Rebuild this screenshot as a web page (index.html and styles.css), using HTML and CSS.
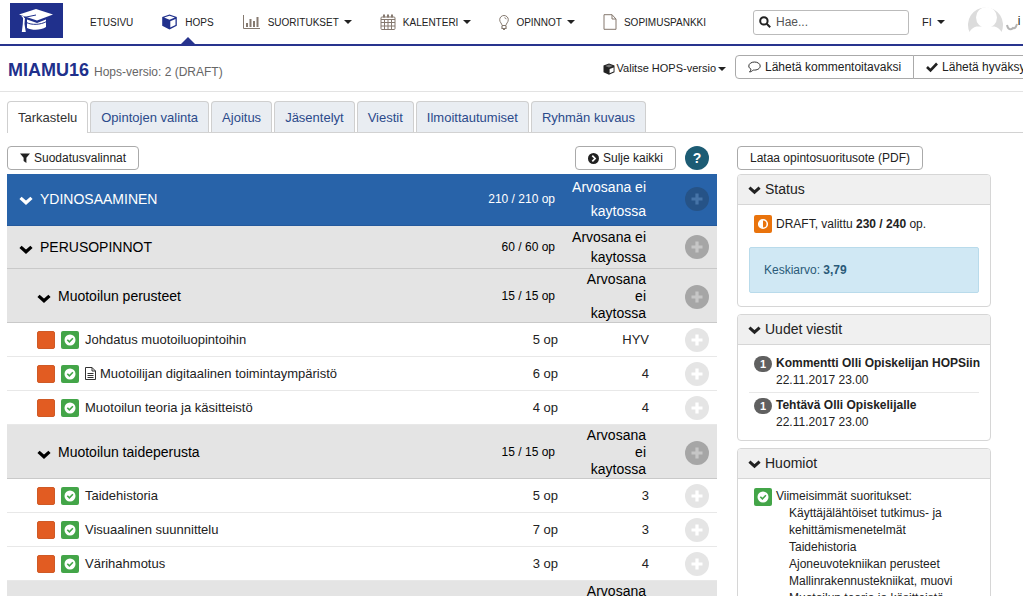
FILE: index.html
```html
<!DOCTYPE html>
<html lang="fi">
<head>
<meta charset="utf-8">
<meta name="viewport" content="width=device-width, initial-scale=1">
<title>MIAMU16 – HOPS</title>
<link rel="stylesheet" href="styles.css">
</head>
<body>
<svg class="sprite" aria-hidden="true">
  <symbol id="chevron" viewBox="0 0 12 12"><path d="M1.300 4.200 6 8.400l4.700-4.200" fill="none" stroke="currentColor" stroke-width="2.800"/></symbol>
  <symbol id="plus" viewBox="0 0 24 24"><path d="M12 6.500v11M6.500 12h11" fill="none" stroke="currentColor" stroke-width="3.200"/></symbol>
  <symbol id="check" viewBox="0 0 12 12"><circle cx="6" cy="6" r="5.500" fill="#fff"/><path d="M3.300 5.800 5.400 7.900 8.900 4.300" fill="none" stroke="#43a548" stroke-width="1.600"/></symbol>
  <symbol id="cube" viewBox="0 0 16 16"><path d="M8 .5 15.300 3v8.800L8 15.500.7 11.800V3z" fill="currentColor"/><path d="M8 1.700 13.400 3.600 8 5.800 2.600 3.600z" fill="#fff"/><path d="M8.800 7.200 14 5v6L8.800 13.600z" fill="#fff"/></symbol>
  <symbol id="cube-small" viewBox="0 0 12 12"><path d="M6 .5 11.500 2.600v6.600L6 11.700.5 9.200V2.600z" fill="currentColor"/><path d="M6.600 6 10.600 4.400v4.100L6.600 10.300z" fill="#fff"/><path d="m6 1.500 3.800 1.400L6 4.400 2.200 2.900z" fill="#777"/></symbol>
</svg>

<header class="topbar">
  <a class="logo" href="#" aria-label="Etusivu">
    <svg viewBox="0 0 53 35" width="53" height="35"><path d="M9 11.500 26 6l17 5.500-16 6z" fill="#fff"/><path d="M17 16.500 27 20l9-3.500v7.500c-5 3.500-14 3.500-19 1z" fill="#fff"/><path d="M11 12.500 15 14l-.500 7 1.300 8h-4l1-8 .3-6z" fill="#fff"/><path d="m14 14.500 12-2.500" stroke="#20308c" fill="none"/><path d="M16.500 19.500c5 2.700 14 2.500 20-1" stroke="#20308c" fill="none"/></svg>
  </a>
  <nav class="nav">
    <a href="#">ETUSIVU</a>
    <a href="#" class="active"><svg class="brand" width="17" height="16"><use href="#cube"/></svg>HOPS</a>
    <a href="#"><svg width="19" height="15" viewBox="0 0 19 15" fill="none" stroke="#85796f"><path d="M1.500 0v13.500H18"/><path d="M5 12V8M8.500 12V4M12 12V6M15.500 12V2" stroke-width="2"/></svg>SUORITUKSET<i class="caret"></i></a>
    <a href="#"><svg width="16" height="16" viewBox="0 0 16 16" fill="none" stroke="#85796f"><rect x="1" y="3" width="14" height="12.500" rx="1"/><path d="M1 5.500h14M1 8.500h14M1 12h14M4.500 5.500v10M8 5.500v10M11.500 5.500v10"/><path d="M4 .5v3M8 .5v3M12 .5v3" stroke-width="2"/></svg>KALENTERI<i class="caret"></i></a>
    <a href="#"><svg width="10" height="15" viewBox="0 0 10 15" fill="none" stroke="#85796f"><path d="M3 10.500C3 8.500.7 7.400.7 4.700a4.300 4.200 0 0 1 8.600 0C9.300 7.400 7 8.500 7 10.500zM5.500 2.700c1 .2 1.500.7 1.700 1.500"/><path d="M3 11v2.500h4V11M4 14.500h2" stroke-width="1.200"/></svg>OPINNOT<i class="caret"></i></a>
    <a href="#"><svg width="14" height="16" viewBox="0 0 14 16" fill="none" stroke="#85796f"><path d="M1 .7h8l4 4.300v10.300H1zM9 .7V5h4"/></svg>SOPIMUSPANKKI</a>
  </nav>
  <div class="tools">
    <label class="search"><svg width="12" height="12" viewBox="0 0 12 12" fill="none" stroke="#222" stroke-width="2"><circle cx="4.900" cy="4.900" r="3.700"/><path d="m7.700 7.700 3.500 3.500"/></svg><input type="search" placeholder="Hae..." aria-label="Hae"></label>
    <a class="lang" href="#">FI<i class="caret"></i></a>
    <a class="user" href="#"><svg width="35" height="31" viewBox="0 0 35 31"><path d="M1.500 29A17.500 17.500 0 1 1 33.500 29c-1.500-3-4-4.500-7-5.500H8.500c-3 1-5.500 2.500-7 5.500z" fill="#dcdcdc"/><ellipse cx="18.500" cy="14.500" rx="10.500" ry="10.500" fill="#fff"/></svg><svg width="15" height="31" viewBox="0 0 15 31"><path d="M4 22c1 5 4 5 6 3 2 1 3-1 4-4" fill="none" stroke="#b4b4b4" stroke-width="2"/></svg><span>i</span></a>
  </div>
</header>

<div class="titlebar">
  <h1>MIAMU16 <small>Hops-versio: 2 (DRAFT)</small></h1>
  <a class="version" href="#"><svg width="12" height="12"><use href="#cube-small"/></svg>Valitse HOPS-versio<i class="caret"></i></a>
  <div class="actions">
    <button class="btn"><svg width="13" height="12" viewBox="0 0 13 12" fill="none" stroke="#333"><path d="M6.500 1C3.400 1 .8 2.700.8 5c0 1.400.9 2.500 2.200 3.200C2.900 9.500 2.200 10.300 1.500 11 3.300 10.800 4.400 9.900 5.200 9c4 .5 7-1.500 7-4 0-2.300-2.600-4-5.700-4z"/></svg>Lähetä kommentoitavaksi</button><button class="btn"><svg width="12" height="12" viewBox="0 0 12 12"><path d="m1 6 3.500 3.500L11 2.500" fill="none" stroke="#222" stroke-width="2.600"/></svg>Lähetä hyväksyttäväksi</button>
  </div>
</div>

<nav class="tabs">
  <a href="#" class="current">Tarkastelu</a>
  <a href="#">Opintojen valinta</a>
  <a href="#">Ajoitus</a>
  <a href="#">Jäsentelyt</a>
  <a href="#">Viestit</a>
  <a href="#">Ilmoittautumiset</a>
  <a href="#">Ryhmän kuvaus</a>
</nav>

<div class="content">
  <main>
    <div class="toolbar">
      <button class="btn"><svg width="10" height="10" viewBox="0 0 10 10"><path d="M0 .5h10L6.400 4.700V10L3.600 8V4.700z" fill="#222"/></svg>Suodatusvalinnat</button>
      <button class="btn close-all"><svg width="11" height="11" viewBox="0 0 11 11"><circle cx="5.500" cy="5.500" r="5.500" fill="#222"/><path d="m4.300 2.700 2.800 2.800-2.800 2.800" fill="none" stroke="#fff" stroke-width="1.700"/></svg>Sulje kaikki</button>
      <button class="help" aria-label="Ohje">?</button>
    </div>
    <table class="plan">
      <colgroup><col><col class="c-credits"><col class="c-grade"><col class="c-add"></colgroup>
      <tbody>
        <tr class="module top"><td><div class="name"><svg><use href="#chevron"/></svg>YDINOSAAMINEN</div></td><td>210 / 210 op</td><td>Arvosana ei kaytossa</td><td><button class="add" aria-label="Lisää"><svg><use href="#plus"/></svg></button></td></tr>
        <tr class="module mid"><td><div class="name"><svg><use href="#chevron"/></svg>PERUSOPINNOT</div></td><td>60 / 60 op</td><td>Arvosana ei kaytossa</td><td><button class="add" aria-label="Lisää"><svg><use href="#plus"/></svg></button></td></tr>
        <tr class="module sub"><td><div class="name"><svg><use href="#chevron"/></svg>Muotoilun perusteet</div></td><td>15 / 15 op</td><td>Arvosana ei kaytossa</td><td><button class="add" aria-label="Lisää"><svg><use href="#plus"/></svg></button></td></tr>
        <tr class="course"><td><div class="name"><i class="mark"></i><span class="badge ok"><svg><use href="#check"/></svg></span>Johdatus muotoiluopintoihin</div></td><td>5 op</td><td>HYV</td><td><button class="add" aria-label="Lisää"><svg><use href="#plus"/></svg></button></td></tr>
        <tr class="course"><td><div class="name"><i class="mark"></i><span class="badge ok"><svg><use href="#check"/></svg></span><span class="noted"><svg width="11" height="13" viewBox="0 0 11 13" fill="none" stroke="#333"><path d="M.5.5h6.500l3.500 3.500v8.500H.5zM7 .5V4h3.500M2.500 6.500h6M2.500 8.500h6M2.500 10.500h6"/></svg>Muotoilijan digitaalinen toimintaympäristö</span></div></td><td>6 op</td><td>4</td><td><button class="add" aria-label="Lisää"><svg><use href="#plus"/></svg></button></td></tr>
        <tr class="course"><td><div class="name"><i class="mark"></i><span class="badge ok"><svg><use href="#check"/></svg></span>Muotoilun teoria ja käsitteistö</div></td><td>4 op</td><td>4</td><td><button class="add" aria-label="Lisää"><svg><use href="#plus"/></svg></button></td></tr>
        <tr class="module sub"><td><div class="name"><svg><use href="#chevron"/></svg>Muotoilun taideperusta</div></td><td>15 / 15 op</td><td>Arvosana ei kaytossa</td><td><button class="add" aria-label="Lisää"><svg><use href="#plus"/></svg></button></td></tr>
        <tr class="course"><td><div class="name"><i class="mark"></i><span class="badge ok"><svg><use href="#check"/></svg></span>Taidehistoria</div></td><td>5 op</td><td>3</td><td><button class="add" aria-label="Lisää"><svg><use href="#plus"/></svg></button></td></tr>
        <tr class="course"><td><div class="name"><i class="mark"></i><span class="badge ok"><svg><use href="#check"/></svg></span>Visuaalinen suunnittelu</div></td><td>7 op</td><td>3</td><td><button class="add" aria-label="Lisää"><svg><use href="#plus"/></svg></button></td></tr>
        <tr class="course"><td><div class="name"><i class="mark"></i><span class="badge ok"><svg><use href="#check"/></svg></span>Värihahmotus</div></td><td>3 op</td><td>4</td><td><button class="add" aria-label="Lisää"><svg><use href="#plus"/></svg></button></td></tr>
        <tr class="module sub"><td></td><td></td><td>Arvosana ei kaytossa</td><td></td></tr>
      </tbody>
    </table>
  </main>

  <aside>
    <button class="btn pdf">Lataa opintosuoritusote (PDF)</button>
    <section class="panel">
      <h2><svg><use href="#chevron"/></svg>Status</h2>
      <div class="body status">
        <div class="item"><span class="badge draft"><svg viewBox="0 0 12 12"><circle cx="6" cy="6" r="4.300" fill="none" stroke="#fff" stroke-width="1.600"/><path d="M6 2v8a4 4 0 0 1 0-8z" fill="#fff"/></svg></span><p>DRAFT, valittu <b>230 / 240</b> op.</p></div>
        <p class="average">Keskiarvo: <b>3,79</b></p>
      </div>
    </section>
    <section class="panel">
      <h2><svg><use href="#chevron"/></svg>Uudet viestit</h2>
      <div class="body messages">
        <div class="item"><span class="count">1</span><p><b>Kommentti Olli Opiskelijan HOPSiin</b><br>22.11.2017 23.00</p></div>
        <div class="item"><span class="count">1</span><p><b>Tehtävä Olli Opiskelijalle</b><br>22.11.2017 23.00</p></div>
      </div>
    </section>
    <section class="panel">
      <h2><svg><use href="#chevron"/></svg>Huomiot</h2>
      <div class="body">
        <div class="item"><span class="badge ok"><svg><use href="#check"/></svg></span><div>Viimeisimmät suoritukset:
          <ul><li>Käyttäjälähtöiset tutkimus- ja kehittämismenetelmät</li><li>Taidehistoria</li><li>Ajoneuvotekniikan perusteet</li><li>Mallinrakennustekniikat, muovi</li><li>Muotoilun teoria ja käsitteistö</li></ul></div></div>
      </div>
    </section>
  </aside>
</div>
</body>
</html>
```
FILE: styles.css
```css
* { box-sizing: border-box; }
body {
  margin: 0;
  overflow-x: hidden;
  background: #fff;
  color: #222;
  font: 12px/17px "Liberation Sans", Arial, sans-serif;
}
a { color: inherit; text-decoration: none; }
p, h1, h2, ul { margin: 0; padding: 0; }
button, input { font: inherit; color: inherit; }
svg { display: block; flex: none; }
.sprite { display: none; }
.caret {
  border: 4px solid transparent;
  border-top-color: currentColor;
  border-bottom: 0;
}

.topbar {
  display: flex;
  align-items: center;
  height: 46px;
  padding-left: 10px;
  border-bottom: 2px solid #28348e;
  white-space: nowrap;
}
.logo { margin-bottom: 3px; background: #20308c; }
.nav { display: flex; align-self: stretch; gap: 28px; margin-left: 27px; font-size: 10px; }
.nav a { position: relative; display: flex; align-items: center; gap: 7px; }
.nav .caret, .lang .caret { margin-left: -2px; }
.brand { color: #20308c; }
.active::after {
  content: "";
  position: absolute;
  bottom: 0;
  left: 50%;
  margin-left: -7px;
  border: 7px solid transparent;
  border-top: 0;
  border-bottom-color: #28348e;
}
.tools { display: flex; align-items: center; align-self: stretch; flex: none; width: 270px; margin-left: auto; overflow: hidden; }
.search {
  display: flex;
  flex: none;
  align-items: center;
  gap: 5px;
  width: 156px;
  height: 25px;
  padding: 0 5px;
  border: 1px solid #bbb;
  border-radius: 3px;
}
.search input { width: 100%; min-width: 0; padding: 0; border: 0; background: none; outline: 0; }
.search input::placeholder { color: #555; opacity: 1; }
.lang { display: flex; align-items: center; gap: 7px; margin: 0 23px 0 13px; font-size: 11px; }
.user { display: flex; align-items: center; align-self: flex-start; padding-top: 3px; }
.user span { padding-top: 5px; }

.titlebar {
  display: flex;
  align-items: center;
  height: 46px;
  padding-left: 8px;
  border-bottom: 1px solid #e3e3e3;
  white-space: nowrap;
}
h1 { padding-top: 4px; color: #20308c; font-size: 18px; line-height: 20px; }
h1 small { color: #666; font-size: 12px; font-weight: normal; }
.version { display: flex; align-items: center; gap: 2px; margin-left: auto; padding-right: 9px; font-size: 11px; }
.actions { display: flex; flex: none; width: 288px; margin-bottom: 3px; overflow: hidden; }
.btn {
  display: flex;
  flex: none;
  align-items: center;
  gap: 4px;
  height: 24px;
  padding: 0 12px;
  border: 1px solid #aaa;
  border-radius: 4px;
  background: #fff;
  font-size: 12px;
}
.actions .btn:first-child { border-radius: 4px 0 0 4px; }
.actions .btn + .btn { margin-left: -1px; border-radius: 0 4px 4px 0; }

.tabs {
  display: flex;
  gap: 2px;
  margin: 9px 0 13px 7px;
  border-bottom: 1px solid #d2d2d2;
  font-size: 13px;
}
.tabs a {
  height: 31px;
  padding: 0 10px;
  border: 1px solid #cfcfcf;
  border-bottom: 0;
  border-radius: 4px 4px 0 0;
  background: #e9edf2;
  color: #2b4a8b;
  line-height: 31px;
}
.tabs .current { margin-bottom: -1px; height: 32px; background: #fff; color: #333; }

.content {
  display: grid;
  grid-template-columns: minmax(0, 1fr) 254px;
  gap: 20px;
  padding: 0 32px 0 7px;
}
.toolbar { display: flex; align-items: center; gap: 9px; height: 24px; margin-bottom: 4px; }
.close-all { margin-left: auto; }
.help {
  width: 24px;
  height: 24px;
  margin-right: 8px;
  padding: 0;
  border: 0;
  border-radius: 50%;
  background: #1d5c74;
  color: #fff;
  font-size: 14px;
  font-weight: bold;
}

.plan { width: 100%; table-layout: fixed; border-collapse: separate; border-spacing: 0; }
.c-credits { width: 100px; }
.c-grade { width: 91px; }
.c-add { width: 68px; }
.plan td { padding: 0; text-align: right; }
.plan td:first-child { text-align: left; }
.plan td:last-child { padding-right: 8px; }
.name { display: flex; align-items: center; }
.name > svg { width: 14px; height: 14px; margin: 3px 7px 0 0; }
.add {
  display: block;
  width: 24px;
  height: 24px;
  margin-left: auto;
  padding: 0;
  border: 0;
  border-radius: 50%;
}
.add svg { width: 24px; height: 24px; }

.module td { border-bottom: 1px solid #c9c9c9; background: #e4e4e4; color: #000; font-size: 14px; }
.module td:nth-child(2) { padding-right: 3px; font-size: 12px; }
.module td:nth-child(3) { padding-right: 3px; }
.module .name { padding-left: 12px; }
.module .add { background: #a6a6a6; color: #c6c6c6; }
.module.top td { height: 52px; padding-bottom: 2px; border-color: #24599c; background: #2863a9; color: #fff; line-height: 24px; }
.module.top .add { background: #265387; color: #4674a8; }
.module.mid td { height: 43px; line-height: 20px; }
.module.sub td { height: 54px; padding-top: 2px; line-height: 17px; }
.module.sub td:nth-child(3) { padding-left: 20px; }
.module.sub .name { padding-left: 30px; }

.course td { height: 34px; border-bottom: 1px solid #e8e8e8; font-size: 13px; }
.course .name { gap: 6px; padding-left: 30px; }
.course .add { background: #e5e5e5; color: #fff; }
.noted { display: flex; align-items: center; gap: 4px; }
.mark { width: 18px; height: 18px; border: 1px solid #cf5a26; border-radius: 2px; background: #e25c22; }
.badge {
  display: flex;
  flex: none;
  align-items: center;
  justify-content: center;
  width: 18px;
  height: 18px;
  border-radius: 2px;
}
.badge svg { width: 12px; height: 12px; }
.ok { background: #43a548; }
.draft { background: #e9730c; }

.pdf { margin-bottom: 4px; }
.panel { margin-bottom: 7px; border: 1px solid #d6d6d6; border-radius: 4px; overflow: hidden; }
.panel h2 {
  display: flex;
  align-items: center;
  gap: 4px;
  height: 30px;
  padding-left: 10px;
  border-bottom: 1px solid #d6d6d6;
  background: #f0f0f0;
  font-size: 14px;
  font-weight: normal;
}
.panel h2 svg { width: 13px; height: 13px; }
.body { padding: 9px 11px; }
.item { display: flex; gap: 4px; padding-left: 5px; }
.status .item { align-items: center; }
.status { padding-top: 10px; }
.average {
  margin: 14px 0 4px;
  padding: 13px 14px;
  border: 1px solid #b9dbeb;
  border-radius: 2px;
  background: #d0e8f4;
  color: #2a5a78;
  line-height: 18px;
}
.messages { padding-top: 10px; white-space: nowrap; }
.messages .item:first-child { padding-bottom: 3px; box-shadow: 0 1px #e8e8e8; }
.messages .item + .item { margin-top: 2px; padding-top: 3px; }
.count {
  flex: none;
  width: 18px;
  height: 16px;
  margin-top: 1px;
  border-radius: 8px;
  background: #606060;
  color: #fff;
  font-size: 11px;
  font-weight: bold;
  line-height: 16px;
  text-align: center;
}
ul { padding-left: 13px; list-style: none; }
```
